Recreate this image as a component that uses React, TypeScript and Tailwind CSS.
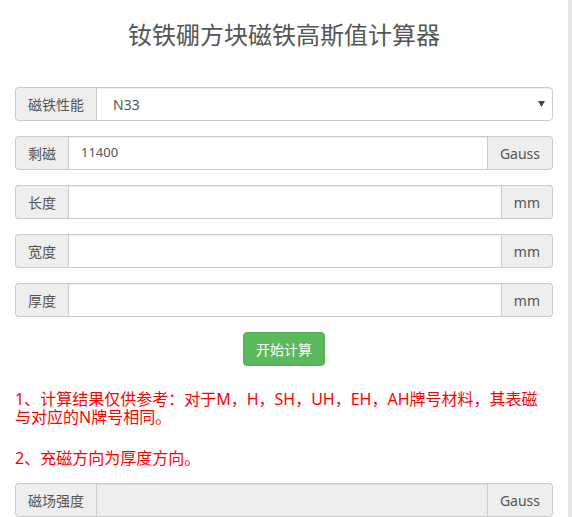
import React from "react";

const font = { fontFamily: '"Noto Sans", "Noto Sans CJK SC", sans-serif' };

function Addon({ children, side }: { children: React.ReactNode; side: "l" | "r" }) {
  return (
    <div
      className={
        side === "l"
          ? "flex items-center px-3 bg-[#eeeeee] border border-[#cccccc] border-r-0 rounded-l-[4px] text-[14px] text-[#555555] whitespace-nowrap"
          : "flex items-center px-3 bg-[#eeeeee] border border-[#cccccc] border-l-0 rounded-r-[4px] text-[14px] text-[#555555] whitespace-nowrap"
      }
    >
      {children}
    </div>
  );
}

function Row({ label, unit, value, disabled }: { label: string; unit: string; value?: string; disabled?: boolean }) {
  return (
    <div className="flex h-[34px]">
      <Addon side="l">{label}</Addon>
      <div
        className={
          disabled
            ? "flex-1 flex items-center px-3 border border-[#cccccc] bg-[#eeeeee] shadow-[inset_0_1px_1px_rgba(0,0,0,0.075)]"
            : "flex-1 flex items-center px-3 border border-[#cccccc] bg-white shadow-[inset_0_1px_1px_rgba(0,0,0,0.075)]"
        }
      >
        <span className="text-[13px] text-[#555555]">{value}</span>
      </div>
      <Addon side="r">{unit}</Addon>
    </div>
  );
}

export default function App() {
  return (
    <div className="flex w-[572px] h-[517px] bg-white overflow-hidden" style={font}>
      <div className="w-[568px] px-[15px]">
        <h1 className="pt-[22px] mb-[38px] h-[49px] text-center text-[24px] leading-[26px] text-[#555555] font-normal">
          钕铁硼方块磁铁高斯值计算器
        </h1>
        <div className="flex flex-col gap-[15px]">
          <div className="flex h-[34px]">
            <Addon side="l">磁铁性能</Addon>
            <div className="flex-1 flex items-center justify-between pl-4 pr-[7px] border border-[#cccccc] rounded-r-[4px] bg-white shadow-[inset_0_1px_1px_rgba(0,0,0,0.075)]">
              <span className="text-[14px] text-[#555555]">N33</span>
              <svg width="7" height="6" viewBox="0 0 7 6">
                <path d="M0 0 H7 L3.5 6 Z" fill="#444" />
              </svg>
            </div>
          </div>
          <Row label="剩磁" unit="Gauss" value="11400" />
          <Row label="长度" unit="mm" />
          <Row label="宽度" unit="mm" />
          <Row label="厚度" unit="mm" />
          <div className="flex justify-center">
            <button className="h-[34px] px-3 bg-[#5cb85c] border border-[#4cae4c] rounded-[4px] text-white text-[14px]">
              开始计算
            </button>
          </div>
        </div>
        <div className="mt-[24px] h-[36px] flex flex-col text-[16px] text-[#ff0000]">
          <div className="h-[18px] leading-[18px] whitespace-nowrap">1、计算结果仅供参考：对于M，H，SH，UH，EH，AH牌号材料，其表磁</div>
          <div className="h-[18px] leading-[18px] whitespace-nowrap">与对应的N牌号相同。</div>
        </div>
        <div className="mt-[23px] h-[18px] leading-[18px] text-[16px] text-[#ff0000]">2、充磁方向为厚度方向。</div>
        <div className="mt-[16px]">
          <Row label="磁场强度" unit="Gauss" disabled />
        </div>
      </div>
      <div className="w-[4px] h-full bg-[#e6e6e6]" />
    </div>
  );
}
